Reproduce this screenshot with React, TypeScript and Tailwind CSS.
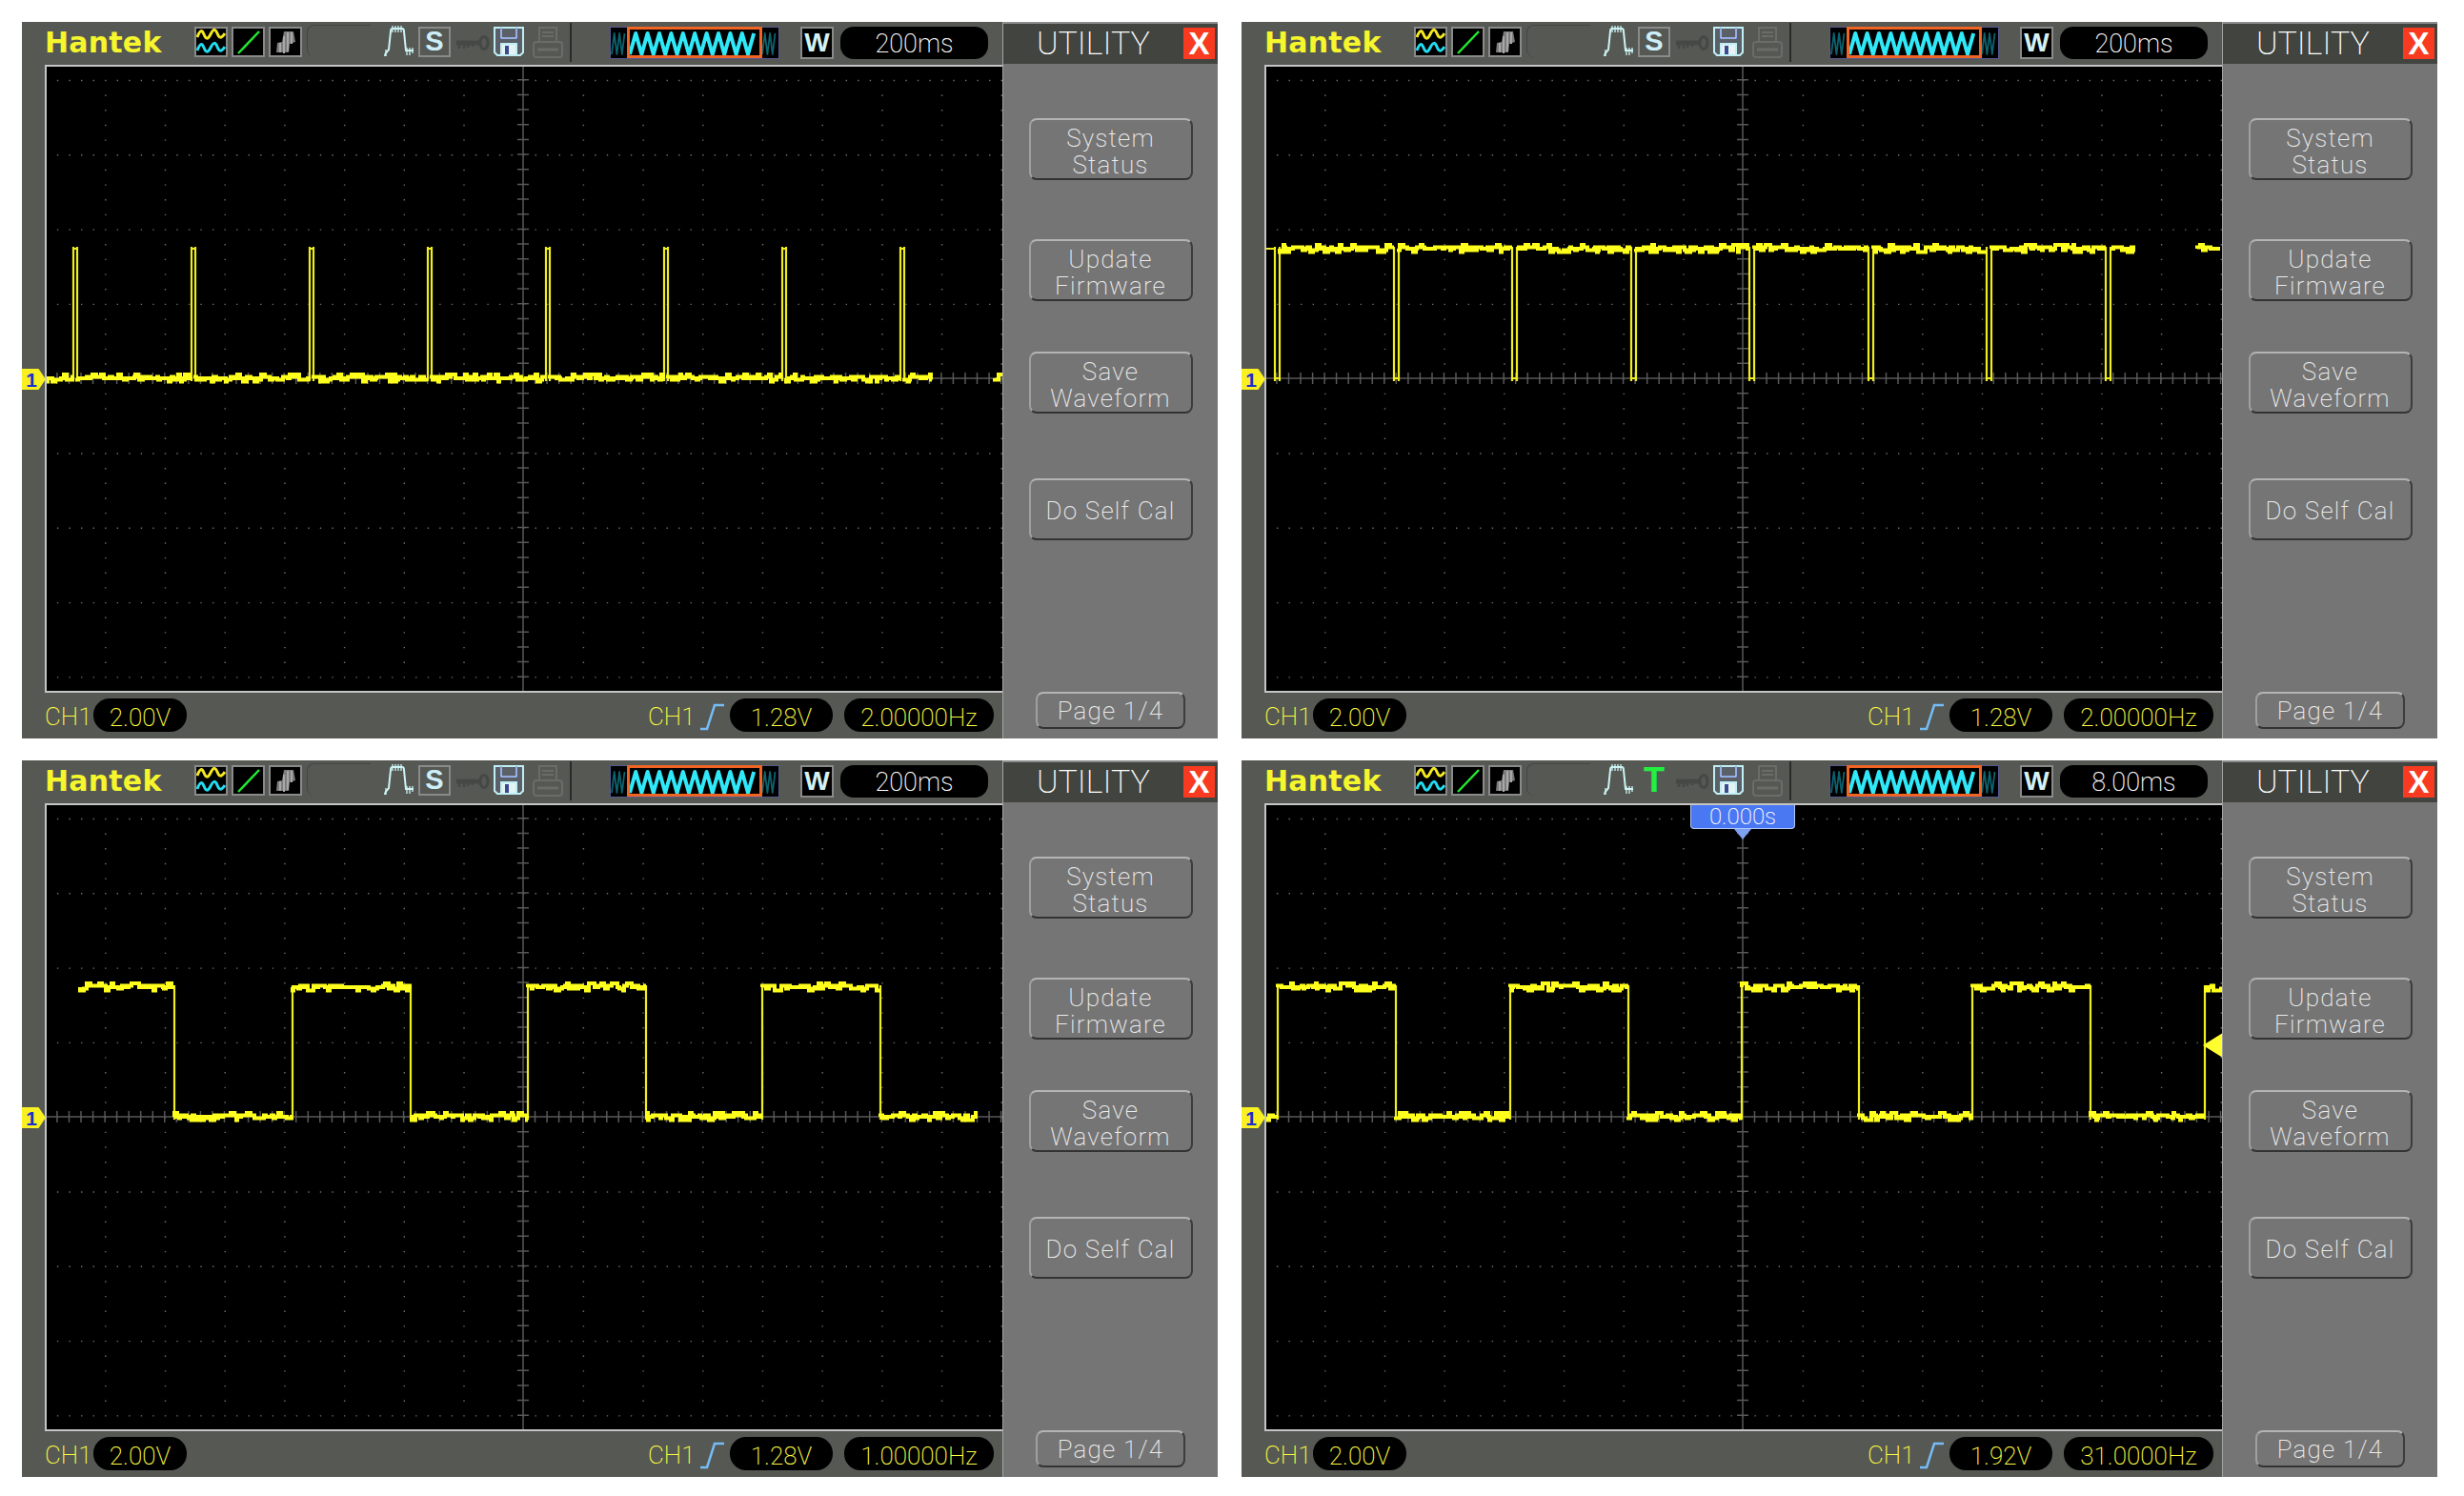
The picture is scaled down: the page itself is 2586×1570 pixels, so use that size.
const thin = "font-[Roboto,sans-serif] font-extralight";

// small seeded random, so each trace keeps its own noise
function rng(seed: number) {
  let s = seed;
  return () => {
    s = (s * 16807) % 2147483647;
    return s / 2147483647;
  };
}

type Trace = {
  seed: number;
  start: number;
  end: number;
  startHigh: boolean;
  edges: number[];
  tail?: [number, number];
  high: number;
  low: number;
};

function traceNoise(t: Trace) {
  const rand = rng(t.seed);
  const stops = [t.start, ...t.edges, t.end];
  let noise = "";
  let edge = "";
  let isHigh = t.startHigh;
  // the scope draws blocky noise, so the band is made of short flat steps
  const band = (from: number, to: number, y: number) => {
    let d = `M${from} ${y}`;
    let x = from;
    while (x < to) {
      const r = rand();
      const offset = r > 0.88 ? -4 : r < 0.1 ? 3.5 : r > 0.55 ? -1.5 : r < 0.28 ? 1.5 : 0;
      const run = 1 + Math.floor(rand() * 4);
      d += `V${y + offset}H${Math.min(x + run, to)}`;
      x += run;
    }
    return d;
  };
  for (let i = 0; i < stops.length - 1; i++) {
    const y = isHigh ? t.high : t.low;
    if (stops[i + 1] - stops[i] > 12) noise += band(stops[i], stops[i + 1], y);
    else edge += `M${stops[i]} ${y}L${stops[i + 1]} ${y}`;
    if (i < stops.length - 2) edge += `M${stops[i + 1]} ${t.high - 2}L${stops[i + 1]} ${t.low + 3}`;
    isHigh = !isHigh;
  }
  if (t.tail) noise += band(t.tail[0], t.tail[1], t.tail[0] > 985 ? t.low : t.high);
  return { noise, edge };
}

function gridDots() {
  let d = "";
  for (let k = -4; k <= 4; k++) {
    if (k === 0) continue;
    for (let i = -40; i <= 40; i++) {
      d += `M${(501 + i * 12.54).toFixed(1)} ${(329 + k * 78.3).toFixed(1)}h1.4v1.4h-1.4z`;
    }
  }
  for (let j = -8; j <= 8; j++) {
    if (j === 0) continue;
    for (let i = -20; i <= 20; i++) {
      d += `M${(501 + j * 62.7).toFixed(1)} ${(329 + i * 15.66).toFixed(1)}h1.4v1.4h-1.4z`;
    }
  }
  return d;
}

function axisTicks() {
  let d = "M0 329H1004M501 0V658";
  for (let i = -40; i <= 40; i++) d += `M${(501 + i * 12.54).toFixed(1)} 323v12`;
  for (let i = -20; i <= 20; i++) d += `M495 ${(329 + i * 15.66).toFixed(1)}h12`;
  return d;
}

const dots = gridDots();
const ticks = axisTicks();

function Scope({ trace, arrow }: { trace: Trace; arrow?: boolean }) {
  const { noise, edge } = traceNoise(trace);
  return (
    <svg viewBox="1 2 1003 655" className="block h-full w-full">
      <path d={dots} fill="#6e6e6e" />
      <path d={ticks} stroke="#585858" strokeWidth="1.5" fill="none" />
      <path d={edge} stroke="#eeee20" strokeWidth="2.2" fill="none" />
      <path d={noise} stroke="#ffff1e" strokeWidth="4" fill="none" />
      {arrow && <polygon points="984,254 1005,241 1005,267" fill="#ffff30" />}
    </svg>
  );
}

function IconBox({ children }: { children: React.ReactNode }) {
  return (
    <div className="h-[32px] w-[35px] shrink-0 border-2 border-[#8a8a8a] bg-black">
      <svg viewBox="0 0 31 28" className="block h-full w-full">
        {children}
      </svg>
    </div>
  );
}

function PulseIcon() {
  return (
    <svg viewBox="0 0 32 33" className="h-[33px] w-[32px] shrink-0" fill="none" stroke="#cdf4f4" strokeWidth="2">
      <path d="M2 32c0-4 3-5 4-7L8 6q0-3 2-3h10q2 0 2 3l2 20h8" />
      <path d="M10 0v7M13 0v7M16 0v7M19 0v7M25 23v8M28 23v8M31 23v6M3 25v7" strokeWidth="1.3" />
    </svg>
  );
}

function KeyIcon() {
  return (
    <svg viewBox="0 0 35 16" className="h-[16px] w-[35px] shrink-0" fill="none" stroke="#464845">
      <path d="M0 8h24" strokeWidth="5" />
      <path d="M3 9v5M8 9v5M12 9v4M17 9v3" strokeWidth="2.5" />
      <ellipse cx="29" cy="8" rx="4" ry="6.5" strokeWidth="3" />
    </svg>
  );
}

function FloppyIcon() {
  return (
    <svg viewBox="0 0 32 31" className="h-[31px] w-[32px] shrink-0" fill="none" stroke="#bfeef4" strokeWidth="2">
      <path d="M1 1h30v26l-3 3H4l-3-3z" fill="#5b6068" />
      <path d="M8 1v11h16V1" stroke="#6d6fd0" />
      <path d="M8 1v11h16V1" strokeWidth="1" />
      <rect x="8" y="18" width="16" height="12" fill="#e4f4f4" stroke="#bfeef4" />
      <rect x="12" y="20" width="4" height="9" fill="#3a4a90" stroke="none" />
    </svg>
  );
}

function PrinterIcon() {
  return (
    <svg viewBox="0 0 32 33" className="h-[33px] w-[32px] shrink-0" fill="none" stroke="#6a6c68" strokeWidth="2">
      <path d="M7 16V1h18v15M10 6h12M10 10h12" />
      <rect x="1" y="16" width="30" height="16" rx="3" />
      <path d="M5 24h22" strokeWidth="3" />
    </svg>
  );
}

function sineRun(from: number, to: number, cycle: number) {
  let d = "";
  let n = 0;
  for (let x = from; x <= to; x += cycle / 2) {
    d += `${n === 0 ? "M" : "L"}${x.toFixed(1)} ${n % 2 === 0 ? 28 : 6}`;
    n++;
  }
  return d;
}

function WaveBar() {
  return (
    <div className="relative ml-[22px] h-[34px] w-[178px] shrink-0 border border-[#56598e] bg-black">
      <svg viewBox="0 0 176 32" className="block h-full w-full" fill="none" strokeLinejoin="round">
        <path d={sineRun(1, 17, 5.4)} stroke="#0c6470" strokeWidth="1.8" />
        <path d={sineRun(159, 175, 5.4)} stroke="#0c6470" strokeWidth="1.8" />
        <path d={sineRun(20, 156, 12.4)} stroke="#2fe8f8" strokeWidth="4" />
      </svg>
      <div className="absolute -top-px left-[17px] h-[33px] w-[142px] border-[3px] border-[#f06424]" />
    </div>
  );
}

function Pill({ width, children }: { width: string; children: React.ReactNode }) {
  return (
    <div
      className={`flex h-[35px] items-center justify-center rounded-[17px] bg-black pt-[5px] text-[26px] leading-none text-[#ffff40] ${thin} ${width}`}
    >
      {children}
    </div>
  );
}

function TopBar({ time, triggered }: { time: string; triggered?: boolean }) {
  return (
    <div className="flex h-[45px] items-start pt-[5px]">
      <div className="ml-[24px] w-[157px] shrink-0 font-['DejaVu_Sans',sans-serif] text-[30px] leading-[34px] font-bold tracking-[0.2px] text-[#f6f62c]">
        Hantek
      </div>
      <div className="flex gap-[4px]">
        <IconBox>
          <path d="M1 9c3-8 5-8 7-3s4 6 7 0 5-6 7-1 4 6 8 0" stroke="#f4e820" strokeWidth="3" fill="none" />
          <path d="M1 23c3-8 5-8 7-3s4 6 7 0 5-6 7-1 4 6 8 0" stroke="#22dcf0" strokeWidth="3" fill="none" />
        </IconBox>
        <IconBox>
          <path d="M5 26L27 3" stroke="#22e830" strokeWidth="2.5" />
        </IconBox>
        <IconBox>
          <path d="M6 25l1-10 5-1 2-11h10l2 11-6 2-1 9z" fill="#7c7c7c" />
          <path d="M10 15v10M14 8v18M18 4v20M22 4v12" stroke="#a8a8a8" strokeWidth="2" />
        </IconBox>
      </div>
      <div className="-mt-[2px] ml-[5px] h-[34px] w-[67px] shrink-0 rounded-tl-[8px] rounded-bl-[8px] border-t border-l border-[#444641]" />
      <div className="ml-[13px] -mt-[1px] shrink-0">
        <PulseIcon />
      </div>
      {triggered ? (
        <div className="ml-[5px] w-[34px] shrink-0 text-center font-['Liberation_Sans',sans-serif] text-[36px] leading-[32px] font-bold text-[#22f040]">
          T
        </div>
      ) : (
        <div className="ml-[5px] flex h-[32px] w-[34px] shrink-0 items-center justify-center border-2 border-[#8a8a8a] font-['Liberation_Sans',sans-serif] text-[29px] font-bold text-[#cdeef8]">
          S
        </div>
      )}
      <div className="mt-[9px] ml-[6px] shrink-0">
        <KeyIcon />
      </div>
      <div className="ml-[4px] shrink-0">
        <FloppyIcon />
      </div>
      <div className="ml-[9px] shrink-0">
        <PrinterIcon />
      </div>
      <div className="-mt-[4px] ml-[7px] h-[41px] w-[2px] shrink-0 bg-[#2a2b28]" />
      <div className="ml-[18px] flex">
        <WaveBar />
      </div>
      <div className="ml-[22px] flex h-[34px] w-[35px] shrink-0 items-center justify-center border-2 border-[#8a8a8a] bg-black font-['Liberation_Sans',sans-serif] text-[28px] font-bold text-[#d4f2f4]">
        W
      </div>
      <div className={`ml-[7px] flex h-[34px] w-[155px] shrink-0 items-center justify-center rounded-[14px] bg-black pt-[3px] text-[27px] leading-none text-white ${thin}`}>
        {time}
      </div>
    </div>
  );
}

function BottomBar({ level, freq }: { level: string; freq: string }) {
  return (
    <div className="flex h-[48px] items-start pt-[6px] pl-[24px]">
      <div className={`mt-[6px] w-[51px] text-[26px] leading-[26px] text-[#ffff40] ${thin}`}>CH1</div>
      <Pill width="w-[98px]">2.00V</Pill>
      <div className={`mt-[6px] ml-[484px] w-[54px] text-[26px] leading-[26px] text-[#ffff40] ${thin}`}>CH1</div>
      <svg viewBox="0 0 27 29" className="mt-[-2px] h-[29px] w-[27px] shrink-0 translate-y-[7px]" fill="none" stroke="#76bcf6" strokeWidth="2.5">
        <path d="M1 27h7l8-25h10" />
      </svg>
      <div className="ml-[5px]">
        <Pill width="w-[108px]">{level}</Pill>
      </div>
      <div className="ml-[12px]">
        <Pill width="w-[157px]">{freq}</Pill>
      </div>
    </div>
  );
}

function MenuButton({ lines, className }: { lines: string[]; className: string }) {
  return (
    <div
      className={`flex h-[65px] w-[172px] flex-col items-center justify-center rounded-[8px] border-2 border-t-[#b4b4b4] border-r-[#3c3c3c] border-b-[#333333] border-l-[#a0a0a0] text-[26px] leading-[28px] tracking-[1.2px] text-[#ececec] ${
        lines.length > 1 ? "pt-[5px]" : "pt-[3px]"
      } ${thin} ${className}`}
    >
      {lines.map((l) => (
        <span key={l}>{l}</span>
      ))}
    </div>
  );
}

function Sidebar() {
  return (
    <div className="flex h-full w-[226px] flex-col items-center border-l border-[#a4a4a4] bg-[#757575]">
      <div className="flex h-[44px] w-full items-start border-t-2 border-[#8c8c8c] bg-[#41443f] pt-[3px]">
        <div className={`mt-[1px] ml-[35px] w-[154px] shrink-0 text-[34px] leading-[32px] text-white ${thin}`}>UTILITY</div>
        <div className="mt-[1px] flex h-[33px] w-[33px] shrink-0 items-center justify-center bg-[#f83a20] font-['Liberation_Sans',sans-serif] text-[33px] leading-none font-bold text-white">
          X
        </div>
      </div>
      <MenuButton lines={["System", "Status"]} className="mt-[57px]" />
      <MenuButton lines={["Update", "Firmware"]} className="mt-[62px]" />
      <MenuButton lines={["Save", "Waveform"]} className="mt-[53px]" />
      <MenuButton lines={["Do Self Cal"]} className="mt-[68px]" />
      <div
        className={`mt-auto mb-[10px] flex h-[39px] w-[157px] items-center justify-center rounded-[8px] border-2 border-t-[#b4b4b4] border-r-[#3c3c3c] border-b-[#333333] border-l-[#a0a0a0] pt-[2px] text-[26px] tracking-[1.2px] text-[#ececec] ${thin}`}
      >
        Page 1/4
      </div>
    </div>
  );
}

function Panel({
  trace,
  time,
  level,
  freq,
  triggered,
}: {
  trace: Trace;
  time: string;
  level: string;
  freq: string;
  triggered?: boolean;
}) {
  return (
    <div className="flex h-[752px] w-[1255px] bg-[#565854]">
      <div className="w-[1029px] shrink-0">
        <TopBar time={time} triggered={triggered} />
        <div className="relative ml-[24px] h-[659px] w-[1005px] border-y-2 border-l-2 border-[#c4c4c4] bg-black">
          <Scope trace={trace} arrow={triggered} />
          <div className="absolute top-[317px] -left-[26px] flex h-[22px] w-[25px] items-center justify-center bg-[#f8f020] pr-[5px] font-['Liberation_Sans',sans-serif] text-[21px] leading-none font-bold text-[#1830d0] [clip-path:polygon(0_0,70%_0,100%_50%,70%_100%,0_100%)]">
            1
          </div>
          {triggered && (
            <div className="absolute top-0 left-[445px] flex flex-col items-center">
              <div className={`flex h-[25px] w-[110px] items-center justify-center rounded-b-[4px] border border-t-0 border-[#b0c8f8] bg-[#4a78f2] text-[24px] leading-none text-white ${thin}`}>
                0.000s
              </div>
              <div className="h-[11px] w-[18px] bg-[#7ea0f0] [clip-path:polygon(0_0,100%_0,50%_100%)]" />
            </div>
          )}
        </div>
        <BottomBar level={level} freq={freq} />
      </div>
      <Sidebar />
    </div>
  );
}

const traces: Trace[] = [
  {
    seed: 1234,
    start: 0,
    end: 930,
    startHigh: false,
    edges: [29, 33, 153, 157, 277, 281, 401, 405, 525, 529, 649, 653, 773, 777, 897, 901],
    tail: [996, 1004],
    high: 193,
    low: 329,
  },
  {
    seed: 8765,
    start: 0,
    end: 912,
    startHigh: true,
    edges: [10, 15, 135, 140, 259, 264, 384, 389, 508, 513, 633, 638, 757, 762, 882, 887],
    tail: [978, 1002],
    high: 193,
    low: 329,
  },
  {
    seed: 4242,
    start: 36,
    end: 978,
    startHigh: true,
    edges: [135, 259, 383, 506, 630, 752, 876],
    high: 193,
    low: 329,
  },
  {
    seed: 9191,
    start: 0,
    end: 1004,
    startHigh: false,
    edges: [13, 137, 257, 381, 500, 623, 742, 866, 986],
    high: 193,
    low: 329,
  },
];

export default function App() {
  return (
    <div className="min-h-[1570px] w-[2586px] bg-white">
      <div className="grid grid-cols-[1255px_1255px] gap-x-[25px] gap-y-[23px] pt-[23px] pl-[23px]">
        <Panel trace={traces[0]} time="200ms" level="1.28V" freq="2.00000Hz" />
        <Panel trace={traces[1]} time="200ms" level="1.28V" freq="2.00000Hz" />
        <Panel trace={traces[2]} time="200ms" level="1.28V" freq="1.00000Hz" />
        <Panel trace={traces[3]} time="8.00ms" level="1.92V" freq="31.0000Hz" triggered />
      </div>
    </div>
  );
}
